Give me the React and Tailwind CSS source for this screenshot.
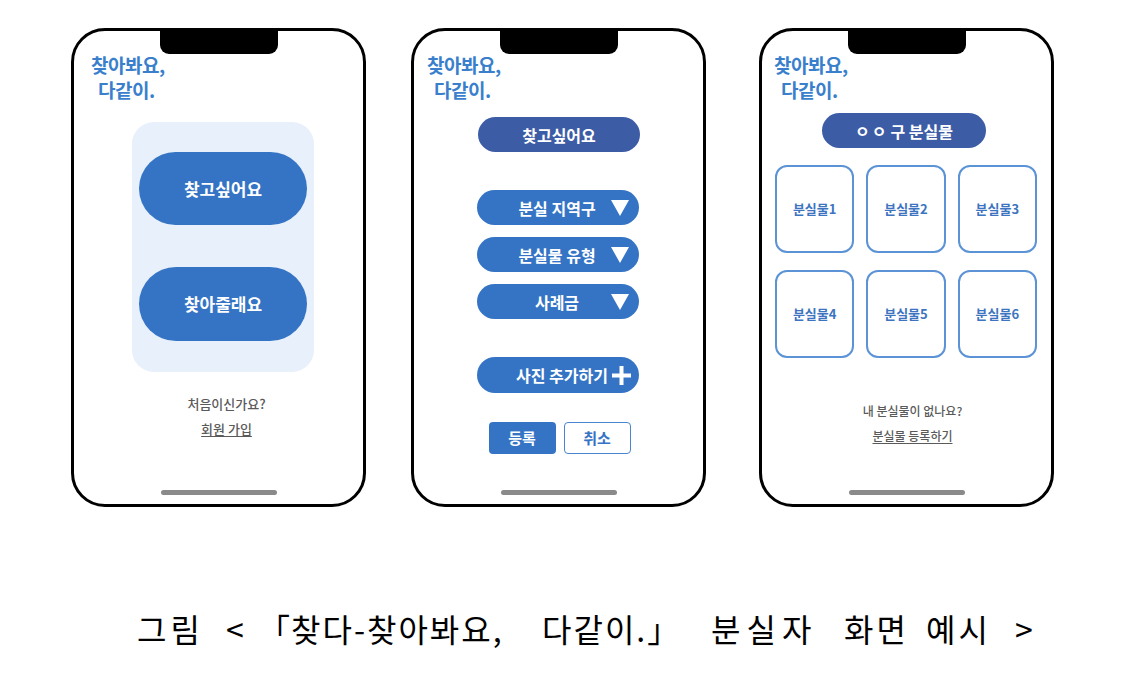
import React from 'react'

const FONT = { fontFamily: '"Noto Sans CJK KR", "Noto Sans", sans-serif' }

function Phone({ className = '', children }) {
  return (
    <div className={`relative w-[295px] h-[479px] shrink-0 border-[3px] border-black rounded-[34px] bg-white ${className}`}>
      <div className="absolute -top-[3px] left-1/2 -translate-x-1/2 w-[118px] h-[26px] bg-black rounded-b-[9px]" />
      {children}
      <div className="absolute bottom-[9px] left-1/2 -translate-x-1/2 w-[116px] h-[5px] rounded-full bg-[#8a8a8a]" />
    </div>
  )
}

function Title({ pl }) {
  return (
    <div className={`${pl} text-[19px] leading-[25px] font-bold text-[#3a7fcc] tracking-[-0.5px]`}>
      <div>찾아봐요,</div>
      <div className="pl-[7px]">다같이.</div>
    </div>
  )
}

function Triangle() {
  return (
    <svg width="18" height="16" viewBox="0 0 18 16" className="absolute right-[10px] top-1/2 -translate-y-1/2">
      <polygon points="0,0 18,0 9,16" fill="#fff" />
    </svg>
  )
}

function Dropdown({ label, mt }) {
  return (
    <div className={`relative ${mt} ml-[63px] w-[162px] h-[35px] rounded-full bg-[#3574c4] flex items-center justify-center text-white font-bold text-[16px]`}>
      <span className="-ml-[2px]">{label}</span>
      <Triangle />
    </div>
  )
}

export default function App() {
  const items = [1, 2, 3, 4, 5, 6]
  return (
    <div className="w-[1146px] h-[694px] bg-white overflow-hidden" style={FONT}>
      <div className="flex items-start pt-[28px] pl-[71px]">
        {/* phone 1 */}
        <Phone>
          <div className="pt-[21px]">
            <Title pl="pl-[17px]" />
            <div className="mt-[20px] ml-[58px] w-[182px] h-[250px] rounded-[22px] bg-[#e7f0fb] px-[7px] pt-[30px] flex flex-col gap-[42px]">
              <div className="h-[73px] rounded-full bg-[#3574c4] flex items-center justify-center text-white font-bold text-[17px]">찾고싶어요</div>
              <div className="h-[74px] rounded-full bg-[#3574c4] flex items-center justify-center text-white font-bold text-[17px]">찾아줄래요</div>
            </div>
            <div className="mt-[22px] ml-[16px] text-center text-[13px] leading-[20px] text-[#5a5a5a] font-medium">처음이신가요?</div>
            <div className="mt-[5px] ml-[16px] text-center text-[13px] leading-[20px] text-[#5a5a5a] font-medium">
              <span className="underline underline-offset-2">회원 가입</span>
            </div>
          </div>
        </Phone>

        {/* phone 2 */}
        <Phone className="ml-[45px]">
          <div className="pt-[21px]">
            <Title pl="pl-[13px]" />
            <div className="mt-[15px] ml-[64px] w-[162px] h-[35px] rounded-full bg-[#3d5ca6] flex items-center justify-center text-white font-bold text-[16px]">찾고싶어요</div>
            <Dropdown label="분실 지역구" mt="mt-[38px]" />
            <Dropdown label="분실물 유형" mt="mt-[12px]" />
            <Dropdown label="사례금" mt="mt-[12px]" />
            <div className="relative mt-[38px] ml-[63px] w-[162px] h-[36px] rounded-full bg-[#3574c4] flex items-center justify-end pr-[8px] gap-[4px] text-white font-bold text-[16px]">
              <span>사진 추가하기</span>
              <svg width="19" height="19" viewBox="0 0 19 19">
                <rect x="7.5" y="0" width="4" height="19" fill="#fff" />
                <rect x="0" y="7.5" width="19" height="4" fill="#fff" />
              </svg>
            </div>
            <div className="mt-[29px] flex justify-center gap-[8px] pl-[2px]">
              <div className="w-[67px] h-[32px] rounded-[4px] bg-[#3574c4] flex items-center justify-center text-white font-bold text-[15px]">등록</div>
              <div className="w-[67px] h-[32px] rounded-[4px] border-[1.5px] border-[#4a86d0] bg-white flex items-center justify-center text-[#3574c4] font-bold text-[15px]">취소</div>
            </div>
          </div>
        </Phone>

        {/* phone 3 */}
        <Phone className="ml-[53px]">
          <div className="pt-[21px]">
            <Title pl="pl-[12px]" />
            <div className="mt-[11px] ml-[60px] w-[164px] h-[35px] rounded-full bg-[#3d5ca6] flex items-center justify-center text-white font-bold text-[16px]">
              <span className="tracking-[2px] mr-[2px]">ㅇㅇ</span>구 분실물
            </div>
            <div className="mt-[17px] ml-[13px] w-[262px] grid grid-cols-3 gap-x-[12px] gap-y-[17px]">
              {items.map(n => (
                <div key={n} className="h-[88px] rounded-[12px] border-2 border-[#5b93d6] flex items-center justify-center text-[#3d74c0] font-bold text-[13px]">
                  분실물{n}
                </div>
              ))}
            </div>
            <div className="mt-[43px] ml-[12px] text-center text-[12px] leading-[20px] text-[#5a5a5a] font-medium">내 분실물이 없나요?</div>
            <div className="mt-[5px] ml-[12px] text-center text-[12px] leading-[20px] text-[#5a5a5a] font-medium">
              <span className="underline underline-offset-2">분실물 등록하기</span>
            </div>
          </div>
        </Phone>
      </div>

      {/* caption */}
      <div className="mt-[97px] pl-[137px] flex text-[32px] leading-[48px] text-black whitespace-pre">
        <span className="w-[89px] shrink-0 tracking-[4px]">그림</span>
        <span className="w-[32px] shrink-0">&lt;</span>
        <span className="w-[33px] shrink-0">「</span>
        <span className="w-[251px] shrink-0 tracking-[2px]">찾다-찾아봐요,</span>
        <span className="w-[169px] shrink-0 tracking-[2px]">다같이.」</span>
        <span className="w-[133px] shrink-0 tracking-[6px]">분실자</span>
        <span className="w-[82px] shrink-0 tracking-[3px]">화면</span>
        <span className="w-[89px] shrink-0 tracking-[3px]">예시</span>
        <span className="shrink-0">&gt;</span>
      </div>
    </div>
  )
}
